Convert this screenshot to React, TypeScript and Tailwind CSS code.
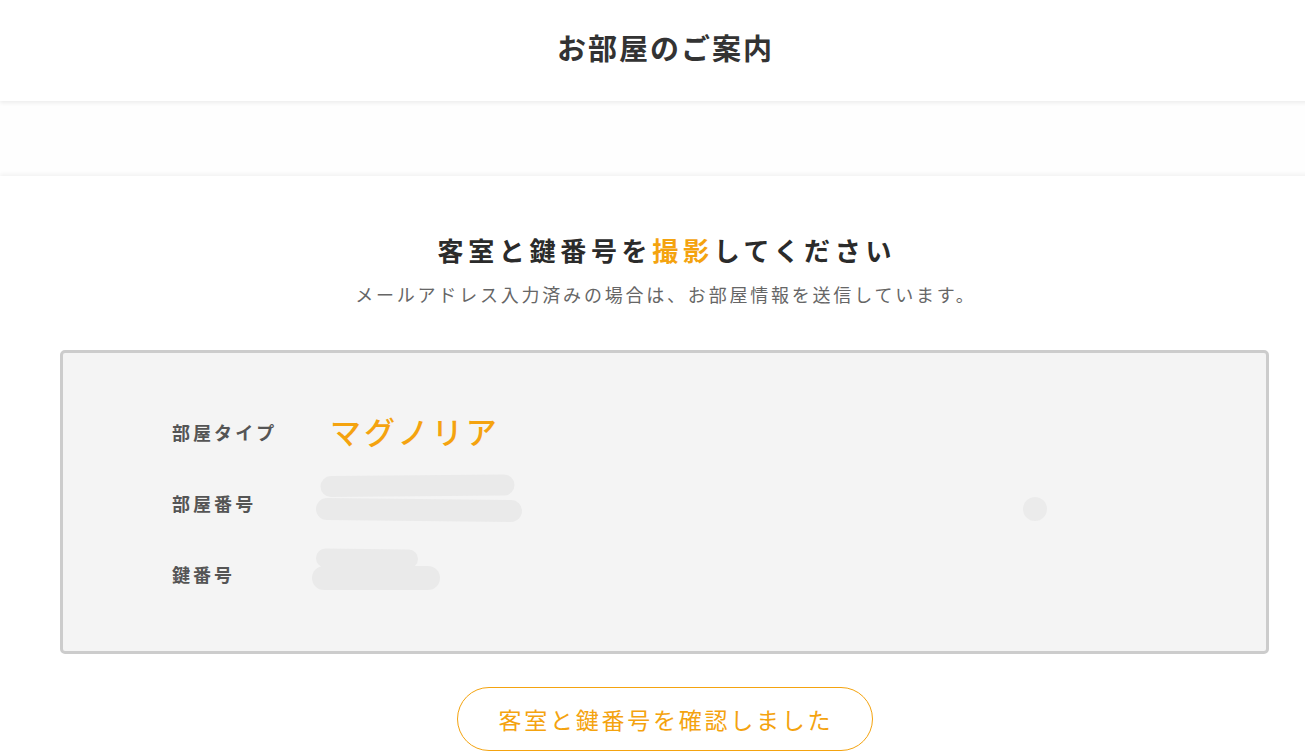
export default function App() {
  const font = { fontFamily: '"Noto Sans CJK JP", "Noto Sans", sans-serif' };

  return (
    <div className="w-full min-h-screen overflow-hidden bg-white" style={font}>
      <div className="w-[1329px]">
        {/* ヘッダー */}
        <header className="relative z-10 h-[101px] flex items-center justify-center bg-white shadow-[0_2px_4px_rgba(0,0,0,0.07)]">
          <h1 className="text-[29px] font-bold text-[#333] tracking-[0.07em] pl-[0.07em] pb-[5px]">お部屋のご案内</h1>
        </header>

        <div className="h-[75px] bg-[#fefefe]" />

        <main className="relative bg-white shadow-[0_-2px_4px_rgba(0,0,0,0.05)] pt-[54px] pb-[20px]">
          <div className="flex flex-col items-center">
            <h2 className="text-[26px] font-bold text-[#2b2b2b] tracking-[0.18em] leading-[1.5] pl-[0.18em]">
              客室と鍵番号を<span className="text-[#f4a30f]">撮影</span>してください
            </h2>
            <p className="mt-[12px] text-[18px] text-[#666] tracking-[0.155em] leading-[1.5] pl-[0.155em]">
              メールアドレス入力済みの場合は、お部屋情報を送信しています。
            </p>
          </div>

          {/* 部屋情報 */}
          <div className="relative mx-[60px] mt-[42px] border-[3px] border-[#cccccc] rounded-[5px] bg-[#f4f4f4] pt-[44px] pb-[41px] pl-[109px]">
            <div className="flex items-center h-[71px]">
              <span className="w-[158px] text-[18px] font-bold text-[#555] tracking-[0.17em]">部屋タイプ</span>
              <span className="text-[31px] font-medium text-[#f4a30f] tracking-[0.1em] mb-[2px]">マグノリア</span>
            </div>
            <div className="flex items-center h-[71px]">
              <span className="w-[158px] text-[18px] font-bold text-[#555] tracking-[0.17em]">部屋番号</span>
              <svg width="210" height="50" viewBox="0 0 210 50" className="-ml-[16px] mb-[10px]">
                <path d="M17 12.5 L190 11" stroke="#eaeaea" strokeWidth="21" strokeLinecap="round" fill="none" />
                <path d="M13 35 L197 37" stroke="#eaeaea" strokeWidth="22" strokeLinecap="round" fill="none" />
              </svg>
            </div>
            <div className="flex items-center h-[71px]">
              <span className="w-[158px] text-[18px] font-bold text-[#555] tracking-[0.17em]">鍵番号</span>
              <svg width="134" height="46" viewBox="0 0 134 46" className="-ml-[20px] mb-[12px]">
                <path d="M15.5 12 L98.5 13" stroke="#eaeaea" strokeWidth="19" strokeLinecap="round" fill="none" />
                <path d="M14 32 L118 32" stroke="#eaeaea" strokeWidth="24" strokeLinecap="round" fill="none" />
              </svg>
            </div>
            <div className="absolute left-[960px] top-[144px] w-[24px] h-[24px] rounded-full bg-[#ebebeb]" />
          </div>

          <div className="flex justify-center mt-[33px]">
            <button className="w-[416px] h-[64px] rounded-full border border-[#f4a30f] bg-white text-[23px] text-[#f4a30f] tracking-[0.12em] pl-[0.12em]">
              客室と鍵番号を確認しました
            </button>
          </div>
        </main>
      </div>
    </div>
  );
}
